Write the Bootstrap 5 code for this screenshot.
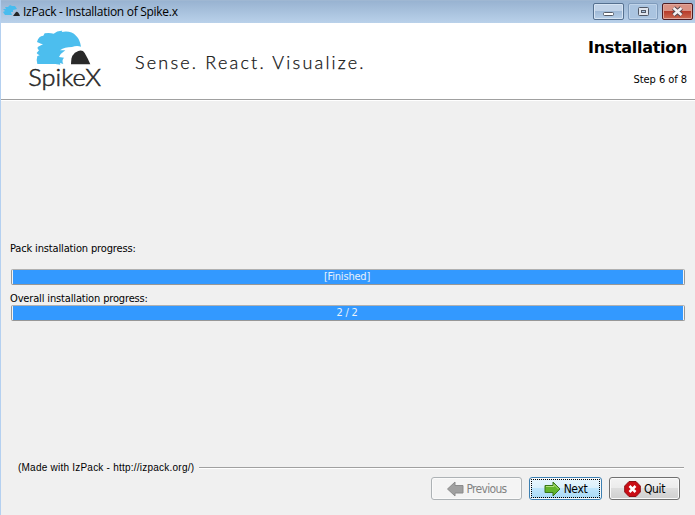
<!DOCTYPE html>
<html lang="en">
<head>
<meta charset="utf-8">
<title>IzPack - Installation of Spike.x</title>
<link href="https://cdn.jsdelivr.net/npm/bootstrap@5.3.0/dist/css/bootstrap.min.css" rel="stylesheet">
<style>
body{font-family:"DejaVu Sans Condensed","DejaVu Sans",sans-serif;font-stretch:condensed;font-size:11px;line-height:14px;color:#000;background:#f0f0f0;overflow:hidden}
.window{width:695px;height:515px;border-left:1px solid #b4d0f0}
.titlebar{height:23px;background:linear-gradient(#98b3d1,#b9d1ea);padding-left:2px;border-top:1px solid #9fb7d2}
.caption{font:12px/16px "Open Sans","Noto Sans",sans-serif;letter-spacing:-.29px;margin:3px 0 0 3px;white-space:nowrap}
.wbtn{height:17px;border:1px solid #55708f;border-radius:2px;box-shadow:inset 0 0 0 1px #d6e4f3;background:linear-gradient(#c1d3e8 48%,#a0bad7 50%,#b7cfe8)}
.wbtn.max{border-color:#7f9bbb;box-shadow:inset 0 0 0 1px #bfd3e9;background:#aac4e0}
.wbtn.quit{border-color:#4e1d22;box-shadow:inset 0 0 0 1px #e0a79c;background:linear-gradient(#d99284 45%,#b83c2b 50%,#cc6b52)}
.banner{height:77px;border-bottom:1px solid #a0a0a0;box-shadow:0 1px #fff;padding-right:8px}
.brand{margin-left:19px}
.tagline{font:300 18px/24px Lato,sans-serif;letter-spacing:2.2px;margin:27px 0 0 25px;white-space:nowrap;color:#111;-webkit-text-stroke:.25px #111}
.heading{font:bold 16px/20px "DejaVu Sans",sans-serif;font-stretch:normal;letter-spacing:-.3px;margin-top:15px}
.step{margin-top:15px;letter-spacing:-.05px}
.work{height:367px;padding:142px 10px 0 9px}
.lbl{letter-spacing:-.15px;height:14px;white-space:nowrap}
.meter{height:16px;border:1px solid #979797;border-top-color:#b0b0b0;border-radius:2px;background:#f4f4f4;padding:0 1px;margin-left:1px}
.meter .progress-bar{background:#3399ff;color:#e9f2fb;font-size:11px;line-height:14px;letter-spacing:-.2px;padding-right:2px}
.credit{font:10px/12px "Liberation Sans",Arial,sans-serif;white-space:nowrap;letter-spacing:.23px}
.rule{height:2px;background:#a0a0a0;border-bottom:1px solid #fff;margin-left:5px}
.wiz{height:23px;border:1px solid #707070;border-radius:3px;padding:0;font-size:12px;line-height:16px;color:#000;background:linear-gradient(#f3f3f3,#ebebeb 49%,#dddddd 50%,#cfcfcf);box-shadow:inset 0 0 0 1px #fafafa;letter-spacing:-.35px;display:flex;align-items:center;justify-content:center;gap:3px}
.wiz:disabled{letter-spacing:-.7px;border-color:#adb2b5;background:#f4f4f4;color:#838383;opacity:1}
.wiz.next{border-color:#3c7fb1;background:linear-gradient(#eaf6fd,#d9f0fc 49%,#bee6fd 50%,#a7d9f5);outline:1px dotted #000;outline-offset:-3px}
</style>
<script src="https://cdn.jsdelivr.net/npm/bootstrap@5.3.0/dist/js/bootstrap.bundle.min.js"></script>
</head>
<body>
<div class="window d-flex flex-column">
  <div class="titlebar d-flex">
    <svg style="margin-top:3px" width="17" height="15" viewBox="0 0 17 15"><path d="M2 11 0 8 2 7 0 5 3 5 2 3 5 3 7 1 9 2 12 2 14 5 10 6 10 8 8 8 9 11Z" fill="#48bcee"/><path d="M10 12 13 8Q15 7 17 12Z" fill="#252525"/></svg>
    <span class="caption">IzPack - Installation of Spike.x</span>
    <div class="d-flex ms-auto" style="padding:2px 2px 0 0;gap:4px">
      <div class="wbtn d-flex" style="width:31px"><svg width="29" height="15"><rect x="9.5" y="8.5" width="10" height="3" rx="1" fill="#fff" stroke="#555b66"/></svg></div>
      <div class="wbtn max d-flex" style="width:30px"><svg width="28" height="15"><rect x="9.5" y="3.5" width="10" height="8" rx="1" fill="#e0e5ed" stroke="#505866"/><rect x="12.5" y="6.5" width="4" height="2" fill="#aac4e0" stroke="#505866"/></svg></div>
      <div class="wbtn quit d-flex" style="width:31px"><svg width="29" height="15"><path d="M10.500 4 18.500 11M18.500 4 10.500 11" stroke="#544950" stroke-width="4.500"/><path d="M10.500 4 18.500 11M18.500 4 10.500 11" stroke="#f5f1f2" stroke-width="2.500"/></svg></div>
    </div>
  </div>
  <div class="banner bg-white d-flex">
    <svg class="brand" width="90" height="76" viewBox="0 -3 270 228">
      <path d="M52 120Q48 108 52 96L59 94Q52 91 50 87L57 79Q51 74 53 69Q62 65 69 61L63 59 51 54Q55 36 70 35L74 28Q89 26 101 29Q112 19 127 20L125 24Q153 19 168 35Q180 46 183 68Q170 64 156 69Q134 69 120 79L136 79Q121 89 117 99L132 101Q124 109 130 120L120 117 121 122 106 120Z" fill="#4cbeee"/>
      <path d="M153 121Q151 89 175 81Q188 77 194 87Q204 104 211 121Z" fill="#292929"/>
      <text x="25" y="185" font-family="Lato,sans-serif" font-size="68" font-weight="300" textLength="218" lengthAdjust="spacingAndGlyphs" fill="#282828" stroke="#282828" stroke-width="1.500">SpikeX</text>
    </svg>
    <div class="tagline">Sense. React. Visualize.</div>
    <div class="ms-auto text-end"><div class="heading">Installation</div><div class="step">Step 6 of 8</div></div>
  </div>
  <div class="work">
    <div class="lbl">Pack installation progress:</div>
    <div class="meter" style="margin-top:13px"><div class="progress-bar w-100">[Finished]</div></div>
    <div class="lbl" style="margin-top:7px;margin-bottom:-1px">Overall installation progress:</div>
    <div class="meter"><div class="progress-bar w-100">2 / 2</div></div>
  </div>
  <div class="d-flex align-items-center" style="height:12px;margin:-5px 11px 0 17px"><span class="credit">(Made with IzPack - http://izpack.org/)</span><div class="rule flex-grow-1"></div></div>
  <div class="d-flex justify-content-end" style="gap:7px;padding:3px 15px 0 0">
    <button class="btn wiz" style="width:91px" disabled><svg width="17" height="16" viewBox="0 0 17 16"><path d="M.5 8 8 1V4.500H16V12H8V15Z" fill="#a0a0a0" stroke="#8b8b8b"/></svg>Previous</button>
    <button class="btn wiz next" style="width:73px"><svg width="17" height="16" viewBox="0 0 17 16"><path d="M16 8 9 1V4.500H1V11.500H9V15Z" fill="#62b52b" stroke="#38761a"/><path d="M2 5.500H10V3.500L14.500 8" fill="none" stroke="#b4df82"/></svg>Next</button>
    <button class="btn wiz" style="width:71px"><svg width="17" height="16" viewBox="0 0 17 16"><path d="M5 .5H12L16.300 5V11L12 15.500H5L.7 11V5Z" fill="#c90d15" stroke="#8d1116"/><path d="M5.500 5 11.500 11M11.500 5 5.500 11" stroke="#fff" stroke-width="2.500"/></svg>Quit</button>
  </div>
</div>
</body>
</html>
